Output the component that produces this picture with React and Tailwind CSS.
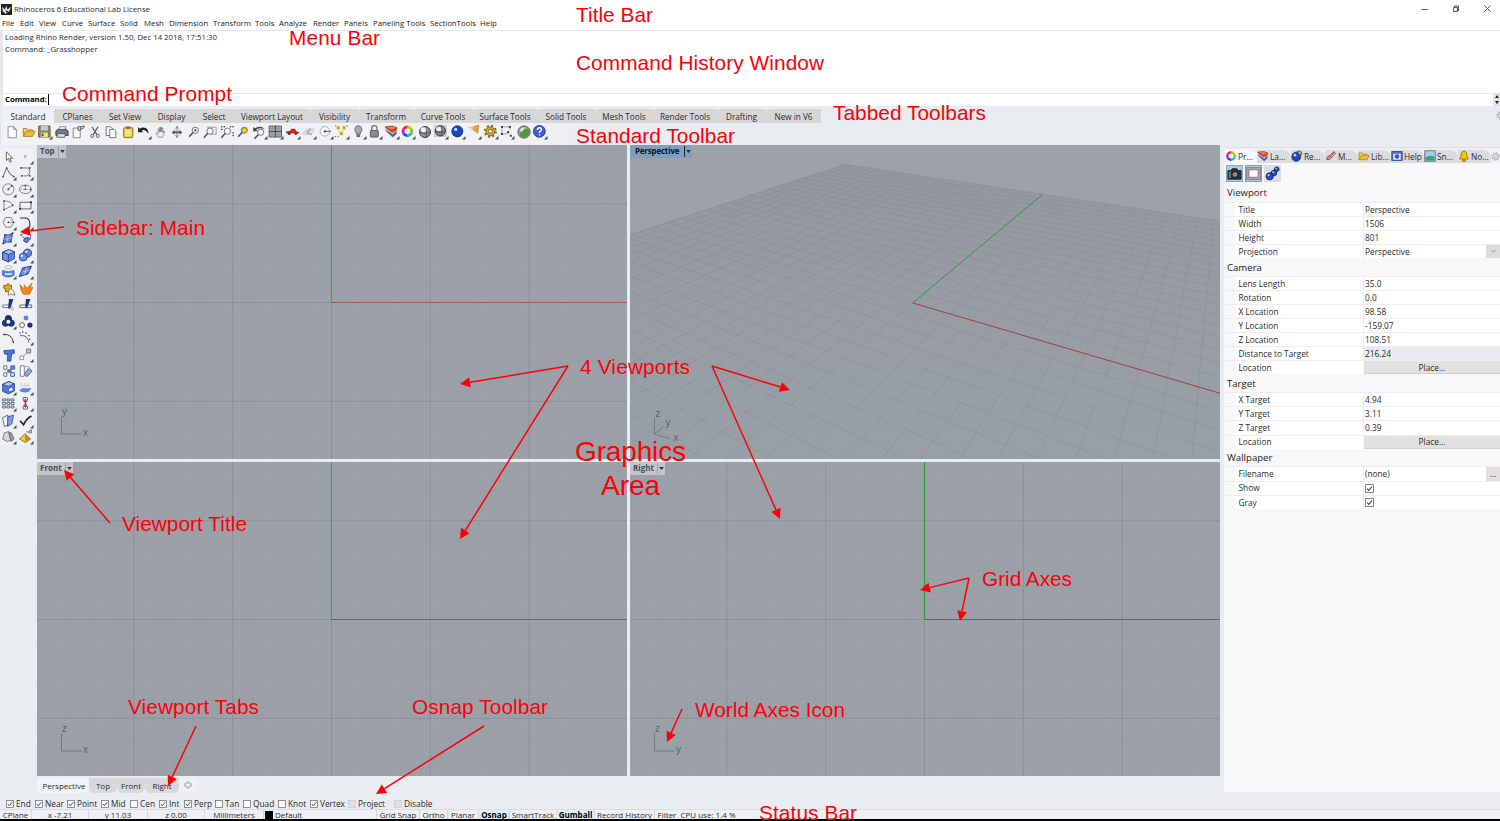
import React from "react";

const BLUE = "#5b82dc";
const NAVY = "#16348f";

const sphere = (cx, cy, r, c, d) => (
  <g>
    <circle cx={cx} cy={cy} r={r} fill={c} stroke={d} strokeWidth="0.9" />
    <circle cx={cx - r * 0.3} cy={cy - r * 0.35} r={r * 0.3} fill="#fff" opacity="0.75" />
  </g>
);

const wheel = (
  <g fill="none" strokeWidth="3.2">
    <path d="M8 3a5 5 0 0 1 4.3 2.5" stroke="#ffb000" />
    <path d="M12.3 5.5a5 5 0 0 1 0 5" stroke="#5fd03a" />
    <path d="M12.3 10.5A5 5 0 0 1 8 13" stroke="#12c5c9" />
    <path d="M8 13a5 5 0 0 1-4.3-2.5" stroke="#2348ee" />
    <path d="M3.7 10.5a5 5 0 0 1 0-5" stroke="#b421dd" />
    <path d="M3.7 5.5A5 5 0 0 1 8 3" stroke="#f2262d" />
  </g>
);

const layers = (
  <g strokeWidth="0.5">
    <path d="M1.5 7l8 7.500 4-3.500V8l-4 3z" fill="#3c63c6" stroke="#26345f" />
    <path d="M1.500 5l8 6.500 4-3.500V6l-4 3z" fill="#f3f3f3" stroke="#666" />
    <path d="M1 3l8-1 5.500 2-1 3-4.500 2.500z" fill="#e8472c" stroke="#8c2014" />
    <path d="M1 3l8-1 5.500 2-6 2.500z" fill="#f0805c" stroke="#8c2014" />
  </g>
);

const folder = (
  <g>
    <path d="M1.5 13V4h4l1.5 1.5h5V7" fill="#f7d87a" stroke="#a87a10" />
    <path d="M1.5 13L4.5 7H15l-3 6z" fill="#f2bb34" stroke="#a87a10" />
  </g>
);

const line = (d, s = "#444", w = 1) => <path d={d} fill="none" stroke={s} strokeWidth={w} />;
const dots = (pts, s = 1.6, c = "#333") =>
  pts.map(([x, y], i) => <rect key={i} x={x - s / 2} y={y - s / 2} width={s} height={s} fill={c} />);
const lens = (x = 9.5, y = 6) => (
  <g>
    <circle cx={x} cy={y} r="3.6" fill="#f4f6f8" stroke="#666" />
    <path d={`M${x - 2.6} ${y + 2.6}L${x - 7} ${y + 7.5}`} stroke="#444" strokeWidth="1.6" />
  </g>
);

const ICONS = {
  new: <path d="M3.5 2h6.500l3 3v9.500h-9.500zM10 2v3h3" fill="#fff" stroke="#888" />,
  open: folder,
  save: (
    <g>
      <path d="M1.500 2h13v12.500h-13z" fill="#8d8560" stroke="#5a543d" />
      <path d="M4 2h8v5H4z" fill="#c7ccd2" />
      <path d="M4 9.500h8v5H4z" fill="#f0df86" />
      <path d="M5 10.500h2v3H5z" fill="#444" />
    </g>
  ),
  print: (
    <g>
      <path d="M4 6l1.500-4h7L11 6z" fill="#fff" stroke="#777" />
      <path d="M1 7l2-2h10l2 2v5H1z" fill="#737880" stroke="#3b3e43" />
      <path d="M3 10h9l-1 4H2z" fill="#dfe2e5" stroke="#555" />
    </g>
  ),
  props: (
    <g>
      <path d="M2.500 3.500h8v11h-8z" fill="#fff" stroke="#777" />
      <path d="M8 2h3v4H8zM11 2l4-1v2l-4 2" fill="#ddd" stroke="#555" />
    </g>
  ),
  cut: (
    <g fill="none" stroke="#555">
      <path d="M4.500 2l5.500 9M11.500 2L6 11" strokeWidth="1.300" />
      <circle cx="4.800" cy="12.500" r="1.800" />
      <circle cx="11.200" cy="12.500" r="1.800" />
    </g>
  ),
  copy: (
    <g fill="#fff" stroke="#666">
      <path d="M2.500 2h5l2 2v8h-7z" />
      <path d="M6.500 5h5l2 2v7.500h-7z" />
    </g>
  ),
  paste: (
    <g>
      <rect x="3" y="3" width="10.500" height="11.500" rx="1" fill="#efc237" stroke="#8d6c15" />
      <rect x="4.500" y="5" width="7.500" height="7.500" fill="#fae27b" />
      <rect x="5.500" y="1.500" width="5" height="3" fill="#777" />
    </g>
  ),
  undo: (
    <g>
      <path d="M2 3v6h6L6 7q4-2 8 4 0-7-6-7.500Q5.500 3.500 4 5z" fill="#222" />
    </g>
  ),
  pan: <path d="M5 14L2 9.500l1-1 1.800 1.300V4.500h1.200V8 3h1.400v5V2.500h1.400V8 3.500h1.400V9l1-2 1 .5-1.500 4.500-1 2z" fill="#eee" stroke="#777" strokeWidth="0.8" />,
  rotate: (
    <g>
      <path d="M8 1.500v13M6.300 4.500L8 1.500l1.700 3M6.300 11.500l1.700 3 1.700-3" fill="none" stroke="#777" strokeWidth="0.900" />
      <path d="M5.500 5.500L2 8.500l3 2.500V9.300h6V11l3-2.500-3.500-3v2h-5z" fill="#555" />
    </g>
  ),
  zoom: (
    <g>
      {lens()}
      {line("M9.500 4.500v3M8 6h3")}
    </g>
  ),
  zoomWin: (
    <g>
      <path d="M4.500 2.500h10.500v8H8" fill="none" stroke="#999" />
      {lens(8, 7)}
    </g>
  ),
  zoomExt: (
    <g>
      {lens(8.500, 7)}
      {dots([[2, 2], [5, 2], [12, 2], [15, 2], [15, 12], [15, 9], [2, 5]], 1.500)}
    </g>
  ),
  zoomSel: (
    <g>
      {lens()}
      <circle cx="9.500" cy="6" r="2.500" fill="#f5dd29" stroke="#b08c12" />
    </g>
  ),
  undoView: (
    <g>
      {lens(9.500, 9)}
      <path d="M1 3v5h5L4.500 6Q9 3 14 6 11 .5 3 4.500z" fill="#444" />
    </g>
  ),
  views: (
    <g>
      <path d="M1 2h14v12.500H1z" fill="#a6abb0" stroke="#555" />
      {line("M8 2v12.500M1 8.200h14", "#333")}
      {line("M4.500 3v11M11.500 3v11M2 5h12M2 11.500h12", "#888", 0.6)}
    </g>
  ),
  car: (
    <g>
      <path d="M1 10V8l4-.5L7 5h4l1.500 3 3 .8V10.500H1z" fill="#d52323" />
      <circle cx="4.500" cy="10.800" r="1.500" fill="#333" />
      <circle cx="12" cy="10.800" r="1.500" fill="#333" />
    </g>
  ),
  cplane: (
    <g>
      {line("M1 11l5-6h9l-4 7zM3.500 11.500l5-6M6.500 11.800l4-6.500M3 9h10M4.500 7h9", "#bbb", 0.7)}
      {line("M6 9.500l5-4M6 9.500l6 2", "#888")}
    </g>
  ),
  circleR: (
    <g>
      <circle cx="7.500" cy="8" r="5.500" fill="none" stroke="#aaa" />
      {line("M7.500 8h7", "#555")}
      {dots([[7.500, 8]], 2)}
    </g>
  ),
  osnapT: (
    <g>
      {dots([[4.500, 4], [11, 4], [8, 10.500]], 3.800, "#e7b92b")}
      {dots([[4.500, 4], [11, 4], [8, 10.500]], 1.400, "#a86a18")}
      {line("M5 6.500l2 2M10.500 6.500l-2 2", "#999", 0.7)}
      {dots([[1.500, 2], [1.500, 14], [14.500, 2], [4.500, 14]], 1.300, "#777")}
    </g>
  ),
  bulb: (
    <g>
      <path d="M8 1.500a4.200 4.200 0 0 0-2.500 7.500V11h5V9A4.200 4.200 0 0 0 8 1.500z" fill="#a8abad" stroke="#666" />
      <path d="M6 11.500h4v3H6z" fill="#666" />
    </g>
  ),
  lock: (
    <g>
      <path d="M5 8V4.500a3 3 0 0 1 6 0V8" fill="none" stroke="#777" strokeWidth="1.500" />
      <rect x="3.500" y="7" width="9" height="7.500" rx="1" fill="#888c90" stroke="#4d4f52" />
    </g>
  ),
  layers,
  wheel,
  shade: (
    <g>
      <circle cx="8" cy="8" r="6.300" fill="#8f9395" stroke="#2a2a2a" />
      <ellipse cx="6.500" cy="5.500" rx="3.500" ry="2.800" fill="#f3f4f4" />
      {line("M2 8.500q6 2.500 12 0M9 1.800q1.500 6 0 12.400", "#333", 0.7)}
    </g>
  ),
  shade2: (
    <g>
      <rect x="0.500" y="0.500" width="15" height="14" fill="#cdd0d3" />
      <circle cx="8" cy="7.500" r="5.800" fill="#85898b" stroke="#2a2a2a" />
      <ellipse cx="6.500" cy="5.200" rx="3.200" ry="2.500" fill="#eceded" />
      {line("M2.500 8q5.500 2.500 11 0M9 1.800q1.500 6 0 11.400", "#333", 0.7)}
    </g>
  ),
  render: sphere(8, 8, 6.300, "#1b46c2", "#0b1f66"),
  spot: (
    <g>
      <path d="M5 4l9-3-1 9z" fill="#eda22c" stroke="#a7691a" strokeWidth="0.700" />
      <path d="M2 3l7 1-3 2z" fill="#eee" stroke="#bbb" strokeWidth="0.600" />
    </g>
  ),
  gear: (
    <g>
      <circle cx="8" cy="8" r="6.200" fill="none" stroke="#8a681e" strokeWidth="2.400" strokeDasharray="2.400 2.470" />
      <circle cx="8" cy="8" r="5" fill="#dba632" stroke="#7e6120" />
      <circle cx="8" cy="8" r="2.200" fill="#fff" stroke="#6e5318" />
    </g>
  ),
  dim: (
    <g>
      {line("M3 3h9M3 3v8M3 11h6M12 3v3", "#999")}
      {dots([[3, 3], [12, 3], [3, 11], [10, 9], [13, 13]], 2.200)}
    </g>
  ),
  earth: (
    <g>
      <circle cx="8" cy="8" r="7" fill="#8eaa88" stroke="#44523f" />
      <path d="M3 12q1-7 10-8 1.500 2 1.500 4-1 5-6 6z" fill="#4b9a3d" />
      <path d="M3 6q3-4 7-3.500L5 8z" fill="#dfe8dc" />
    </g>
  ),
  help: (
    <g>
      <circle cx="8" cy="8" r="6.700" fill="#3e60d0" stroke="#203585" />
      <path d="M5.800 6.500Q6 4 8.200 4t2.200 2.200Q10.300 7.500 8.200 8.500V10M8.200 11v1.600" fill="none" stroke="#fff" strokeWidth="1.600" />
    </g>
  ),
  select: <path d="M5 2v10l2.300-2.200L9 14l1.800-.8L9 9.500h3.200z" fill="#fff" stroke="#555" />,
  point: <rect x="6.800" y="7.300" width="2" height="2" fill="#fff" stroke="#888" strokeWidth="0.700" />,
  polyline: (
    <g>
      {line("M2 13L6 3l4 7 5 3", "#555")}
      {dots([[2, 13], [6, 3], [14, 13]])}
    </g>
  ),
  curve: (
    <g>
      {line("M3 3h7q4 0 3 5t-7 4", "#666")}
      {dots([[3, 3], [13, 3], [13, 12], [4, 12]], 1.800)}
    </g>
  ),
  circle: (
    <g>
      <circle cx="8" cy="8" r="6.300" fill="none" stroke="#666" strokeWidth="0.900" />
      {line("M8 8l4-4", "#666")}
      {dots([[8, 8], [12, 4]], 1.800)}
    </g>
  ),
  ellipse: (
    <g>
      <ellipse cx="8" cy="8" rx="6.800" ry="4.800" fill="none" stroke="#666" strokeWidth="0.900" />
      {line("M2 8h12M8 4v4", "#999", 0.7)}
      {dots([[8, 8], [14, 8], [8, 4]])}
    </g>
  ),
  arc: (
    <g>
      {line("M3 13V3q8 0 10 5L3 13", "#777")}
      {dots([[3, 3], [3, 13], [13, 8]])}
    </g>
  ),
  rect: (
    <g>
      <path d="M2 4.500h12.500v7.500H2z" fill="none" stroke="#555" />
      {dots([[2, 12], [14.500, 4.500]], 2.200)}
    </g>
  ),
  polygon: (
    <g>
      <path d="M5 2.500h6L14 8l-3 5.500H5L2 8z" fill="none" stroke="#777" />
      {line("M8 8h6", "#888")}
      {dots([[8, 8], [14, 8]])}
    </g>
  ),
  fillet: line("M2 3h5q6 0 6 6v5", "#333", 1.2),
  srf: (
    <g>
      <path d="M4 4q5 1 9-2l-2 10q-5 0-9 2z" fill={BLUE} stroke="#2b4387" />
      {line("M8 3.500L6.500 13M3 9q5 0 9-2", "#cfdaf7", 0.7)}
      {dots([[4, 4], [13, 2], [11, 12], [2, 14]])}
    </g>
  ),
  extr: (
    <g>
      <path d="M2 4l7-2 5 2v5l-3-2-4 1z" fill="#eef1fa" stroke="#666" />
      <path d="M7 8l4-1 2 2-3 4-4-2z" fill={BLUE} stroke="#2b4387" />
    </g>
  ),
  box: (
    <g stroke={NAVY} strokeWidth="0.800">
      <path d="M1.500 4.500L8.500 1.500 15 4v8L8 15.500l-6.500-3z" fill={BLUE} />
      <path d="M1.500 4.500l6.500 2.500L15 4 8.500 1.500z" fill="#a9bff5" />
      <path d="M8 7v8.500l-6.500-3v-8z" fill="#7194ea" />
    </g>
  ),
  spheres: (
    <g>
      {sphere(10.500, 5.500, 4.700, BLUE, NAVY)}
      {sphere(5.500, 10, 4.500, "#6a8fe6", NAVY)}
    </g>
  ),
  cyl: (
    <g stroke="#38509a" strokeWidth="0.800">
      <path d="M1.500 7q6.500 3 13 0v5.500q-6.500 4-13 0z" fill={BLUE} />
      <path d="M4 9.500q4 1.500 8 0v2q-4 1.500-8 0z" fill="#dfe7fb" stroke="none" />
      <ellipse cx="8" cy="3.500" rx="4" ry="1.800" fill="#f7f8fb" stroke="#999" />
    </g>
  ),
  mesh: (
    <g>
      <path d="M5 4l10-2-4 9-10 3z" fill={BLUE} stroke={NAVY} />
      {line("M3.500 9l9.500-2.500M10 3l-4 9.500", "#cfdaf7", 0.8)}
    </g>
  ),
  puzzle: (
    <g>
      <path d="M2 4h3q0-2 2-2t2 2h2v3q-2 1 0 3v1H4V8Q1 8 2 4z" fill="#f0a61d" stroke="#80580e" />
      <path d="M8 8h3l2 2 2 5-5-1-3 1z" fill="#f7edcf" stroke="#777" />
    </g>
  ),
  explode: <path d="M1 3l5 5V3l3 4 6-6-2 6 3-1-4 8H5Q2 11 1 3z" fill="#ef851c" stroke="#b3560b" strokeWidth="0.600" />,
  trim: (
    <g>
      <path d="M1 8h7v3H1z" fill="#fff" stroke="#666" />
      <path d="M8 1h5L9.500 12H7z" fill={NAVY} />
      {line("M10 9l3.500 3-2 2-2-3", "#999")}
    </g>
  ),
  split: (
    <g>
      <path d="M1 8h13.500v3H1z" fill="#fff" stroke="#555" />
      <path d="M8 1h5L9.500 11H7z" fill={NAVY} />
    </g>
  ),
  group: (
    <g>
      <circle cx="8" cy="5" r="3.600" fill={NAVY} stroke="#101f55" />
      <circle cx="4.800" cy="10" r="3.600" fill="#19389a" stroke="#101f55" />
      <circle cx="11.200" cy="10" r="3.600" fill="#19389a" stroke="#101f55" />
      <circle cx="8" cy="8.500" r="2.300" fill="#f2f4fb" />
    </g>
  ),
  ungroup: (
    <g>
      <circle cx="8" cy="3.500" r="2.800" fill={BLUE} />
      <circle cx="3.500" cy="11.500" r="2.800" fill="#fff" stroke="#555" />
      <circle cx="12.500" cy="11.500" r="3" fill={NAVY} />
    </g>
  ),
  ptsOn: (
    <g>
      {line("M2 4q9-1 11 9", "#333", 1.1)}
      {dots([[2, 4], [13, 13]])}
    </g>
  ),
  edit: (
    <g>
      {line("M2 6q9-1 10 8", "#555")}
      {dots([[2, 3], [5, 2], [9, 3], [12, 6], [13, 10]], 1.400)}
    </g>
  ),
  text: <path d="M2 3l12-1v4l-3 1-1 8H6l.5-8L3 7z" fill="#4b75dd" stroke={NAVY} strokeWidth="0.800" />,
  move: (
    <g>
      <path d="M9.500 2h4.500v4.500H9.500z" fill="#b9c8ee" stroke="#667" />
      <path d="M2 10h4v4H2z" fill="#fff" stroke="#888" />
      {line("M6 10l4-4", "#888")}
    </g>
  ),
  array: (
    <g>
      <path d="M2 2h3.500v4H2zM2 10h3.500v4H2z" fill="#fff" stroke="#667" />
      <path d="M10 2h4.500v4H10zM6.500 6.500h4v3h-4z" fill={BLUE} stroke={NAVY} strokeWidth="0.600" />
      <path d="M10 10h4v4h-4z" fill="#fff" stroke={NAVY} />
    </g>
  ),
  orient: (
    <g>
      <path d="M1.500 2h4.500v12H1.500z" fill="#fff" stroke="#777" />
      <path d="M11 5l4 3-6 6.500-3-3z" fill="#8fa8e4" stroke="#445a9c" />
      {line("M7 3q4-1 6 2", "#999")}
    </g>
  ),
  boolean: (
    <g stroke={NAVY} strokeWidth="0.800">
      <path d="M1.500 4.500L8.500 1.500 15 4v8L8 15.500l-6.500-3z" fill="#4d78dd" />
      <path d="M1.500 4.500l6.500 2.500L15 4 8.500 1.500z" fill="#b1c4f4" />
      <path d="M8 12.500q0-4 3-4.500t2.500 3" fill="#fff" />
    </g>
  ),
  contour: (
    <g>
      <path d="M1 12l3-3h11l-3 4q-6 2-11-1z" fill={BLUE} />
      {line("M4 6h9M3 3v4M7 3v4M11 3v4", "#c5cad4")}
    </g>
  ),
  grid: (
    <g fill="#fff" stroke="#38456b" strokeWidth="0.900">
      <path d="M1.500 3h3.500v2.200H1.500zM6.500 3h3.300v2.200H6.500zM11.300 3h3.200v2.200h-3.200zM1.500 7h3.500v2.200H1.500zM6.500 7h3.300v2.200H6.500zM11.300 7h3.200v2.200h-3.200zM1.500 11h3.500v2.200H1.500zM6.500 11h3.300v2.200H6.500zM11.300 11h3.200v2.200h-3.200z" />
    </g>
  ),
  dimV: (
    <g>
      <path d="M5.500 1.500h5v3h-5zM5.500 11.500h5v3h-5z" fill="#fff" stroke="#555" />
      {line("M8 3v10M6 6h4M6 10h4", "#d02a2a", 1.4)}
    </g>
  ),
  blocks: (
    <g stroke="#34488d" strokeWidth="0.900">
      <path d="M1.500 5l6-3v11l-4 2z" fill="#fff" />
      <path d="M7.500 4L14 2l-2 10-5 3z" fill="#7e9ceb" />
    </g>
  ),
  check: line("M2 8.500L6 13q3-7 9-10", "#222", 1.9),
  solidEdit: (
    <g stroke="#555" strokeWidth="0.800">
      <path d="M1.500 11l2-7 5-1.500L11 12l-4 2z" fill="#d4d7da" />
      <path d="M8.500 4h3l3 7-3.500 3z" fill="#999fa2" />
    </g>
  ),
  pyramid: (
    <g>
      <path d="M7.500 5l6.500 6-6 4-6.500-4z" fill="#f2cc4a" stroke="#8a6717" />
      <path d="M7.500 5l6.500 6-6 4z" fill="#c88d1c" />
      {line("M9 3h4V1h2v3h-3", "#666")}
    </g>
  ),
  camera: (
    <g>
      <path d="M1 5h3l1.500-2h5L12 5h3v9H1z" fill="#303338" stroke="#15171a" />
      <circle cx="8.500" cy="9" r="3.200" fill="#8a8f95" stroke="#0e0f11" />
      <path d="M2 6h2v7H2z" fill="#777" />
    </g>
  ),
  frame: (
    <g>
      <path d="M0.500 1.500h15v13h-15z" fill="#8fb0c0" stroke="#677" strokeWidth="0.800" />
      <path d="M3 4h10v8H3z" fill="#fff" stroke="#d95353" />
    </g>
  ),
  molecules: (
    <g>
      {sphere(12.500, 3.500, 2.500, "#2c57c8", "#0b1f66")}
      {sphere(9.500, 7.500, 3, "#2c57c8", "#0b1f66")}
      {sphere(5, 11, 3.800, "#2149ba", "#0b1f66")}
    </g>
  ),
  renderTab: (
    <g>
      {sphere(7, 9, 6, "#1d49bb", "#0b1f66")}
      <path d="M8 1.500h5l2 4-4 1z" fill="#aaa" stroke="#444" />
    </g>
  ),
  brush: (
    <g>
      <path d="M2 13q0-5 5-6l2 3q-3 4-7 3z" fill="#d88c7a" stroke="#844" />
      <path d="M7 7l5-5 2 3-5 5z" fill="#eee" stroke="#555" />
      <path d="M8 6l4-4 1 2-4 4z" fill="#d33" />
    </g>
  ),
  helpTab: (
    <g>
      <path d="M1 2h14v12H1z" fill="#4d6fc4" stroke="#263d80" />
      <path d="M3 5h10v8H3z" fill="#dbe4fb" />
      <circle cx="8" cy="8.500" r="3" fill="#3558c0" />
    </g>
  ),
  snap: (
    <g>
      <path d="M1 1h14v14H1z" fill="#9fd3ec" stroke="#556" />
      <path d="M2 10q6-4 12-1v5H2z" fill="#3ba17b" />
    </g>
  ),
  bell: <path d="M8 1q4 1 4 6 0 3 2 5H2q2-2 2-5 0-5 4-6zM6 13h4v2H6z" fill="#f4c40f" stroke="#856608" />,
  cog: (
    <g fill="none" stroke="#a2a5a9">
      <circle cx="8" cy="8" r="4.500" strokeWidth="1.500" />
      <circle cx="8" cy="8" r="6.500" strokeWidth="2" strokeDasharray="2.500 2.600" />
      <circle cx="8" cy="8" r="1.500" />
    </g>
  ),
};

const Icon = ({ name, size = "size-4", flag }) => (
  <svg viewBox="0 0 16 16" className={`${size} shrink-0`}>
    {flag ? <g transform="translate(0.3 0.3) scale(0.88)">{ICONS[name]}</g> : ICONS[name]}
    {flag && <path d="M15.500 12v3.500H12z" fill="#4a4a4a" />}
  </svg>
);

const MENUS = [
  ["File", "w-[18px]"], ["Edit", "w-[19px]"], ["View", "w-[23px]"], ["Curve", "w-[26px]"],
  ["Surface", "w-[32px]"], ["Solid", "w-[24px]"], ["Mesh", "w-[25px]"], ["Dimension", "w-[44px]"],
  ["Transform", "w-[42px]"], ["Tools", "w-[24px]"], ["Analyze", "w-[34px]"], ["Render", "w-[31px]"],
  ["Panels", "w-[29px]"], ["Paneling Tools", "w-[57px]"], ["SectionTools", "w-[50px]"], ["Help", "w-[24px]"],
];

const TABS = [
  ["Standard", "w-[52px]"], ["CPlanes", "w-[47px]"], ["Set View", "w-[48px]"], ["Display", "w-[45px]"],
  ["Select", "w-[40px]"], ["Viewport Layout", "w-[76px]"], ["Visibility", "w-[49px]"], ["Transform", "w-[54px]"],
  ["Curve Tools", "w-[60px]"], ["Surface Tools", "w-[64px]"], ["Solid Tools", "w-[58px]"], ["Mesh Tools", "w-[58px]"],
  ["Render Tools", "w-[64px]"], ["Drafting", "w-[49px]"], ["New in V6", "w-[55px]"],
];

const TOOLBAR = [
  "new", "open", "save*", "print", "props", "cut", "copy", "paste", "undo*", "pan", "rotate", "zoom", "zoomWin",
  "zoomExt", "zoomSel", "undoView*", "views*", "car*", "cplane*", "circleR*", "osnapT*", "bulb*", "lock*",
  "layers*", "wheel*", "shade", "shade2*", "render*", "spot*", "gear*", "dim*", "earth", "help*",
];

const SIDEBAR = [
  "select", "point*", "polyline*", "curve*", "circle*", "ellipse*", "arc*", "rect*", "polygon*", "fillet*",
  "srf*", "extr*", "box*", "spheres*", "cyl*", "mesh*", "puzzle", "explode", "trim", "split", "group*", "ungroup",
  "ptsOn", "edit*", "text", "move*", "array", "orient", "boolean*", "contour*", "grid*", "dimV*", "blocks*", "check*",
  "solidEdit*", "pyramid*",
];

const PANEL_TABS = [
  ["wheel", "Pr...", "w-[32px]"], ["layers", "La...", "w-[34px]"], ["renderTab", "Re...", "w-[34px]"],
  ["brush", "M...", "w-[33px]"], ["open", "Lib...", "w-[33px]"], ["helpTab", "Help", "w-[33px]"],
  ["snap", "Sn...", "w-[34px]"], ["bell", "No...", "w-[33px]"],
];

const SECTIONS = [
  ["Viewport", [["Title", "Perspective"], ["Width", "1506"], ["Height", "801"], ["Projection", "Perspective", "select"]]],
  ["Camera", [["Lens Length", "35.0"], ["Rotation", "0.0"], ["X Location", "98.58"], ["Y Location", "-159.07"],
    ["Z Location", "108.51"], ["Distance to Target", "216.24", "readonly"], ["Location", "Place...", "button"]]],
  ["Target", [["X Target", "4.94"], ["Y Target", "3.11"], ["Z Target", "0.39"], ["Location", "Place...", "button"]]],
  ["Wallpaper", [["Filename", "(none)", "browse"], ["Show", "", "check"], ["Gray", "", "check"]]],
];

const OSNAPS = [
  ["End", 1, "w-[29px]"], ["Near", 1, "w-[32px]"], ["Point", 1, "w-[34px]"], ["Mid", 1, "w-[29px]"],
  ["Cen", 0, "w-[29px]"], ["Int", 1, "w-[25px]"], ["Perp", 1, "w-[31px]"], ["Tan", 0, "w-[28px]"],
  ["Quad", 0, "w-[35px]"], ["Knot", 0, "w-[32px]"], ["Vertex", 1, "w-[38px]"], ["Project", 2, "w-[46px]"],
  ["Disable", 2, "w-[50px]"],
];

const STATUS = [
  ["CPlane", "w-[32px] border-r"], ["x -7.21", "w-[57px] border-r"], ["y 11.03", "w-[59px] border-r"],
  ["z 0.00", "w-[57px] border-r"], ["Millimeters", "w-[59px] border-r"], ["Default", "w-[113px] border-r"],
  ["Grid Snap", "w-[43px] border-r"], ["Ortho", "w-[28px] border-r"], ["Planar", "w-[31px] border-r"],
  ["Osnap", "w-[31px] border-r font-bold text-black bg-[#e2effa]"], ["SmartTrack", "w-[47px] border-r"],
  ["Gumball", "w-[38px] border-r font-bold text-black bg-[#e2effa]"], ["Record History", "w-[60px] border-r"],
  ["Filter", "w-[24px]"], ["CPU use: 1.4 %", "w-[58px]"],
];

function Check({ state = 1, size = "size-[8px]" }) {
  return (
    <svg viewBox="0 0 8 8" className={`${size} shrink-0`}>
      <rect x="0.500" y="0.500" width="7" height="7" fill={state === 2 ? "#dfe0df" : "#fff"} stroke={state === 2 ? "#cfcfcb" : "#777"} strokeWidth="0.800" />
      {state === 1 && <path d="M1.800 4l1.500 1.700 3-3.500" fill="none" stroke="#333" strokeWidth="0.900" />}
    </svg>
  );
}

function ViewTitle({ name, active }) {
  return (
    <div className={`absolute left-0 top-0 flex h-[13px] items-center text-[8px] font-bold ${active ? "bg-[#7f9fc0] text-[#10161e]" : "bg-[#c1c5ca] text-[#484d53]"}`}>
      <span className={`pr-[3px] ${active ? "w-[54px] pl-[5px] tracking-[-0.2px]" : "pl-[3px]"}`}>{name}</span>
      <span className={`flex h-[11px] w-[8px] items-center justify-center border-l ${active ? "border-[#1c242c]" : "border-[#999ea4]"}`}>
        <svg viewBox="0 0 6 4" className="h-[3px] w-[5px]"><path d="M0 0h6L3 4z" fill="#2b2f34" /></svg>
      </span>
    </div>
  );
}

function AxisIcon({ v, h }) {
  return (
    <g stroke="#737980" fill="none">
      <path d="M24.500 271.500v17.500h20" />
      <text x="25" y="269.500" fontSize="10" fill="#5d636a" stroke="none">{v}</text>
      <text x="46" y="291" fontSize="10" fill="#5d636a" stroke="none">{h}</text>
    </g>
  );
}

function Ortho({ name, ax, ay, v, h, vColor, hColor }) {
  const step = 9.88;
  const range = Array.from({ length: 141 }, (_, i) => i - 70);
  return (
    <div className="relative h-[314px] w-[590px] overflow-hidden bg-[#9ca1a9]">
      <svg viewBox="0 0 590 314" className="h-full w-full font-['Liberation_Sans',sans-serif]">
        {range.map((i) => {
          const major = i % 10 === 0;
          const x = ax + i * step;
          const y = ay + i * step;
          return (
            <g key={i} stroke={major ? "#8a8f97" : "#989da5"} strokeWidth={major ? 0.9 : 0.8}>
              {x > 0 && x < 590 && <path d={i === 0 ? `M${x} ${ay}V314` : `M${x} 0V314`} />}
              {y > 0 && y < 314 && <path d={i === 0 ? `M0 ${y}H${ax}` : `M0 ${y}H590`} />}
            </g>
          );
        })}
        <path d={`M${ax} ${ay}V0`} stroke={vColor} strokeWidth="1.200" />
        <path d={`M${ax} ${ay}H590`} stroke={hColor} strokeWidth="1.200" />
        <AxisIcon v={v} h={h} />
      </svg>
      <ViewTitle name={name} />
    </div>
  );
}

const CAM = { at: [98.58, -159.07, 108.51], f: [-0.433, 0.75, -0.5], r: [0.866, 0.5, 0], u: [-0.25, 0.433, 0.866] };
const dot = (a, b) => a[0] * b[0] + a[1] * b[1] + a[2] * b[2];
const toCam = (x, y) => {
  const d = [x - CAM.at[0], y - CAM.at[1], -CAM.at[2]];
  return [dot(d, CAM.r), dot(d, CAM.u), dot(d, CAM.f)];
};

// Projects a ground-plane segment, clipped against a near plane.
function segment(x1, y1, x2, y2) {
  let a = toCam(x1, y1);
  let b = toCam(x2, y2);
  const near = 5;
  if (a[2] < near && b[2] < near) return null;
  const clip = (p, q) => {
    const t = (near - p[2]) / (q[2] - p[2]);
    return p.map((c, i) => c + (q[i] - c) * t);
  };
  if (a[2] < near) a = clip(a, b);
  if (b[2] < near) b = clip(b, a);
  const px = (p) => `${(295 + (458 * p[0]) / p[2]).toFixed(2)} ${(157 - (458 * p[1]) / p[2]).toFixed(2)}`;
  return `M${px(a)}L${px(b)}`;
}

function Perspective() {
  const lines = Array.from({ length: 41 }, (_, i) => (i - 20) * 10);
  return (
    <div className="relative h-[314px] w-[590px] overflow-hidden bg-[#9da2a9]">
      <svg viewBox="0 0 590 314" className="h-full w-full font-['Liberation_Sans',sans-serif]">
        <defs>
          <linearGradient id="ground" x1="0" y1="0" x2="0" y2="1">
            <stop offset="0" stopColor="#93989f" />
            <stop offset="0.5" stopColor="#989da4" />
            <stop offset="1" stopColor="#999fa6" />
          </linearGradient>
        </defs>
        <path d="M215 19L590 76V314H0V89z" fill="url(#ground)" />
        <g fill="none" stroke="#8a9097" strokeWidth="0.550">
          {lines.map((k) => (
            <React.Fragment key={k}>
              <path d={segment(k, -200, k, 200)} />
              <path d={segment(-200, k, 200, k)} />
            </React.Fragment>
          ))}
        </g>
        <path d={segment(0, 0, 0, 200)} stroke="#339a3f" />
        <path d={segment(0, 0, 200, 0)} stroke="#a04248" />
        <path d="M24.500 273v16l15 4.500M24.500 289l9-7" stroke="#737980" fill="none" />
        <g fontSize="10" fill="#5d636a">
          <text x="25.500" y="271.500">z</text>
          <text x="35.500" y="281">y</text>
          <text x="43.500" y="296">x</text>
        </g>
      </svg>
      <ViewTitle name="Perspective" active />
    </div>
  );
}

const NOTES = [
  ["Title Bar", 576, 22, 77], ["Menu Bar", 289, 45, 91], ["Command History Window", 576, 70, 248],
  ["Command Prompt", 62, 101, 170], ["Tabbed Toolbars", 833, 120, 153], ["Standard Toolbar", 576, 143, 159],
  ["Sidebar: Main", 76, 235, 129], ["4 Viewports", 580, 374, 110], ["Viewport Title", 122, 531, 125],
  ["Grid Axes", 982, 586, 90], ["Osnap Toolbar", 412, 714, 136], ["Viewport Tabs", 128, 714, 131],
  ["World Axes Icon", 695, 717, 150], ["Status Bar", 759, 820, 98],
];
const BIG_NOTES = [["Graphics", 575, 461, 111], ["Area", 601, 495, 59]];
const ARROWS = [
  [64, 227, 20, 232], [568, 366, 460, 384], [568, 366, 460, 539], [712, 366, 790, 390], [712, 366, 780, 519],
  [110, 523, 64, 470], [969, 578, 920, 590], [969, 578, 960, 621], [682, 709, 667, 742], [484, 726, 376, 794],
  [196, 726, 168, 786],
];

function Annotations() {
  return (
    <svg viewBox="0 0 1500 821" className="pointer-events-none absolute inset-0 h-[821px] w-[1500px] font-['Liberation_Sans',Arial,sans-serif]">
      <g fill="#fb0007" fontSize="20.800">
        {NOTES.map(([t, x, y, w]) => <text key={t} x={x} y={y} textLength={w}>{t}</text>)}
      </g>
      <g fill="#fb0007" fontSize="28">
        {BIG_NOTES.map(([t, x, y, w]) => <text key={t} x={x} y={y} textLength={w}>{t}</text>)}
      </g>
      {ARROWS.map(([x1, y1, x2, y2]) => {
        const len = Math.hypot(x2 - x1, y2 - y1);
        const ux = (x2 - x1) / len;
        const uy = (y2 - y1) / len;
        const bx = x2 - ux * 10;
        const by = y2 - uy * 10;
        return (
          <g key={`${x1}-${x2}-${y2}`} fill="#fb0007" stroke="none">
            <path d={`M${x1} ${y1}L${bx} ${by}`} stroke="#fb0007" strokeWidth="1.500" />
            <path d={`M${x2} ${y2}L${bx - uy * 5} ${by + ux * 5}L${bx + uy * 5} ${by - ux * 5}z`} />
          </g>
        );
      })}
    </svg>
  );
}

function Value({ value, kind }) {
  if (kind === "button") {
    return <div className="ml-px flex flex-1 items-center justify-center border-b border-[#cfcfcf] bg-[#e1e1e1] pt-px">{value}</div>;
  }
  if (kind === "check") {
    return <div className="flex flex-1 items-center border-l border-[#ececf0] bg-white pl-px"><Check size="size-[9px]" /></div>;
  }
  return (
    <div className={`flex flex-1 items-center border-l border-[#ececf0] pl-px ${kind === "readonly" ? "bg-[#e8eaee]" : "bg-white"}`}>
      <span className="flex-1 pt-px">{value}</span>
      {kind === "select" && (
        <span className="flex h-full w-[14px] items-center justify-center bg-[#dcdcdc]">
          <svg viewBox="0 0 6 4" className="h-[3px] w-[5px]"><path d="M0 0l3 3 3-3" fill="none" stroke="#777" /></svg>
        </span>
      )}
      {kind === "browse" && <span className="flex h-full w-[14px] items-center justify-center bg-[#e1e1e1] pt-px">...</span>}
    </div>
  );
}

function Properties() {
  return (
    <aside className="mt-[2px] flex h-[645px] w-[276px] flex-col overflow-hidden border-t border-[#dcdfe4] bg-[#f8f8fb] text-[8.3px] text-[#2a2a2a]">
      <div className="flex h-[15px] items-end bg-[#eff0f4] pl-px">
        {PANEL_TABS.map(([icon, label, w], i) => (
          <div key={label} className={`flex h-[13px] ${w} shrink-0 items-center gap-px rounded-tr-lg ${i === 0 ? "bg-[#f8f8fb]" : "bg-[#dcdcde]"}`}>
            <Icon name={icon} size="size-[12px]" />
            <span className="pt-px">{label}</span>
          </div>
        ))}
        <span className="flex h-[13px] flex-1 items-center"><Icon name="cog" size="size-[9px]" /></span>
      </div>
      <div className="flex h-[21px] items-center gap-[2px] pl-[2px]">
        <span className="flex size-[17px] items-center justify-center border border-[#78aedb] bg-[#a9cdea]"><Icon name="camera" size="size-[15px]" /></span>
        <span className="flex size-[17px] items-center justify-center border border-[#9a9a9a] bg-[#c9cdd0]"><Icon name="frame" size="size-[15px]" /></span>
        <span className="flex size-[17px] items-center justify-center bg-[#dcdde0]"><Icon name="molecules" size="size-[15px]" /></span>
      </div>
      {SECTIONS.map(([title, rows]) => (
        <section key={title}>
          <h2 className="flex h-[17.800px] items-center pl-[3px] pt-px text-[9.600px] text-[#1c1c1c]">{title}</h2>
          {rows.map(([label, value, kind]) => (
            <div key={label} className="flex h-[14.100px] border-t border-[#eeeef2]">
              <div className="w-[11px]" />
              <div className="flex w-[128px] items-center bg-white pl-[3.500px] pt-px">{label}</div>
              <Value value={value} kind={kind} />
            </div>
          ))}
        </section>
      ))}
    </aside>
  );
}

export default function App() {
  return (
    <div className="relative flex h-[821px] w-[1500px] flex-col overflow-hidden whitespace-nowrap bg-[#e9ecf0] font-['Open_Sans','Noto_Sans',sans-serif] text-[8.3px] leading-none text-[#2a2a2a]">
      <header className="flex h-[18px] items-center bg-white">
        <svg viewBox="0 0 12 12" className="ml-px size-[11px]">
          <path d="M0 0h12v12H0z" fill="#222" />
          <path d="M1 3l3 3 2-4 1 4 4-3-2 5-4 3-3-3z" fill="#ddd" />
          <path d="M5 7l3 1-2 2z" fill="#222" />
        </svg>
        <span className="ml-[2px] flex-1 pt-px text-[7.800px]">Rhinoceros 6 Educational Lab License</span>
        <svg viewBox="0 0 80 18" className="h-[18px] w-[80px]" fill="none" stroke="#444" strokeWidth="0.900">
          <path d="M1.500 9.500h6M33.500 7.500h4v4h-4zM34.500 7V6h4v4.500h-1M64.500 5.500l6 6M70.500 5.500l-6 6" />
        </svg>
      </header>
      <nav className="flex h-[12px] items-center bg-white pb-px pl-[2px] text-[7.800px] text-[#1a1a1a]">
        {MENUS.map(([m, w]) => <span key={m} className={`${w} shrink-0`}>{m}</span>)}
      </nav>
      <div className="flex h-[63px] flex-col gap-[4px] border-l-[3px] border-t border-[#e4e7ec] bg-white pl-[2px] pt-[3px] text-[7.800px]">
        <span>Loading Rhino Render, version 1.50, Dec 14 2018, 17:51:30</span>
        <span>Command: _Grasshopper</span>
      </div>
      <div className="flex h-[13px] items-center border-l-[3px] border-t border-[#e4e7ec] bg-white pl-[2px]">
        <span className="w-[43px] text-[7.800px] font-bold tracking-[-0.05px] text-black">Command:</span>
        <span className="h-[11px] w-px bg-black" />
        <span className="flex-1" />
        <span className="flex h-[13px] w-[7px] flex-col items-center justify-between bg-[#e4e4e4] py-[2px]">
          <svg viewBox="0 0 4 3" className="h-[3px] w-[4px]"><path d="M0 3h4L2 0z" fill="#222" /></svg>
          <svg viewBox="0 0 4 3" className="h-[3px] w-[4px]"><path d="M0 0h4L2 3z" fill="#222" /></svg>
        </span>
      </div>
      <div className="mt-[3px] flex h-[14px] items-stretch pl-[2px]">
        {TABS.map(([t, w], i) => (
          <div key={t} className={`${w} flex shrink-0 items-center justify-center pt-[2px] text-[8.200px] ${i === 0 ? "bg-[#f0f1f5]" : "rounded-tl-[4px] bg-[#d7d7d8]"}`}>{t}</div>
        ))}
        <span className="flex flex-1 items-center justify-end">
          <span className="flex w-[4px] overflow-hidden"><Icon name="cog" size="size-[9px]" /></span>
        </span>
      </div>
      <div className="flex h-[22px] items-center border-l border-[#dfe2e7] bg-gradient-to-r from-[#f1f2f6] from-35% to-[#e9ecf0] to-40% pb-[4px] pl-[3px]">
        {TOOLBAR.map((t) => (
          <span key={t} className="flex w-[16.500px] shrink-0 justify-center">
            <Icon name={t.replace("*", "")} flag={t.endsWith("*")} size={t.endsWith("*") ? "size-[16px]" : "size-[14px]"} />
          </span>
        ))}
      </div>
      <main className="flex h-[650px]">
        <div className="w-[37px] pt-[3.500px]">
          <div className="grid h-[297px] w-[34px] auto-rows-[16.500px] grid-cols-2 bg-[#f0f1f5] pl-px">
            {SIDEBAR.map((t) => (
              <span key={t} className="flex items-center justify-center">
                <Icon name={t.replace("*", "")} flag={t.endsWith("*")} size={t.endsWith("*") ? "size-[16px]" : "size-[14px]"} />
              </span>
            ))}
          </div>
        </div>
        <div className="flex w-[1187px] flex-col">
          <div className="grid w-[1183px] grid-cols-2 gap-x-[3px] gap-y-[3px] bg-[#e9ecf3]">
            <Ortho name="Top" ax={294.5} ay={157.5} v="y" h="x" vColor="#4f9e58" hColor="#a0565c" />
            <Perspective />
            <Ortho name="Front" ax={294.5} ay={157.5} v="z" h="x" vColor="#4f9e58" hColor="#9a5054" />
            <Ortho name="Right" ax={294.5} ay={157.5} v="z" h="y" vColor="#2fa02f" hColor="#3a8045" />
          </div>
          <div className="mt-[2px] flex h-[15px] w-[160px] items-stretch">
            {[["Perspective", "w-[52px] bg-[#f3f4f7] pl-[2px]"], ["Top", "w-[28px] bg-[#d9d9da]"], ["Front", "w-[28px] bg-[#d9d9da]"], ["Right", "w-[34px] bg-[#d9d9da]"]].map(([t, c]) => (
              <span key={t} className={`${c} flex shrink-0 items-center justify-center rounded-b-md pt-px text-[8px]`}>{t}</span>
            ))}
            <span className="flex w-[18px] shrink-0 items-center justify-center rounded-br-md bg-[#f0f1f4]">
              <svg viewBox="0 0 8 8" className="size-[8px]"><path d="M3 1h2v2h3v2H5v2H3V5H0V3h3z" fill="#fff" stroke="#888" strokeWidth="0.700" /></svg>
            </span>
          </div>
        </div>
        <Properties />
      </main>
      <div className="mt-[4px] flex h-[11px] items-center pl-[6px] pt-px">
        {OSNAPS.map(([t, s, w]) => (
          <label key={t} className={`${w} flex shrink-0 items-center gap-[2px]`}>
            <Check state={s} />
            <span>{t}</span>
          </label>
        ))}
      </div>
      <footer className="flex h-[10px] items-stretch border-t border-[#dadde2] bg-[#eff0f4] text-[8px]">
        {STATUS.map(([t, c]) => (
          <span key={t} className={`${c} flex shrink-0 items-center border-[#d3d6db] pt-px ${t === "Default" ? "justify-start gap-[2px] pl-px" : "justify-center"}`}>
            {t === "Default" && <span className="size-[8px] bg-black" />}
            {t}
          </span>
        ))}
      </footer>
      <div className="h-[2px] bg-black" />
      <Annotations />
    </div>
  );
}
